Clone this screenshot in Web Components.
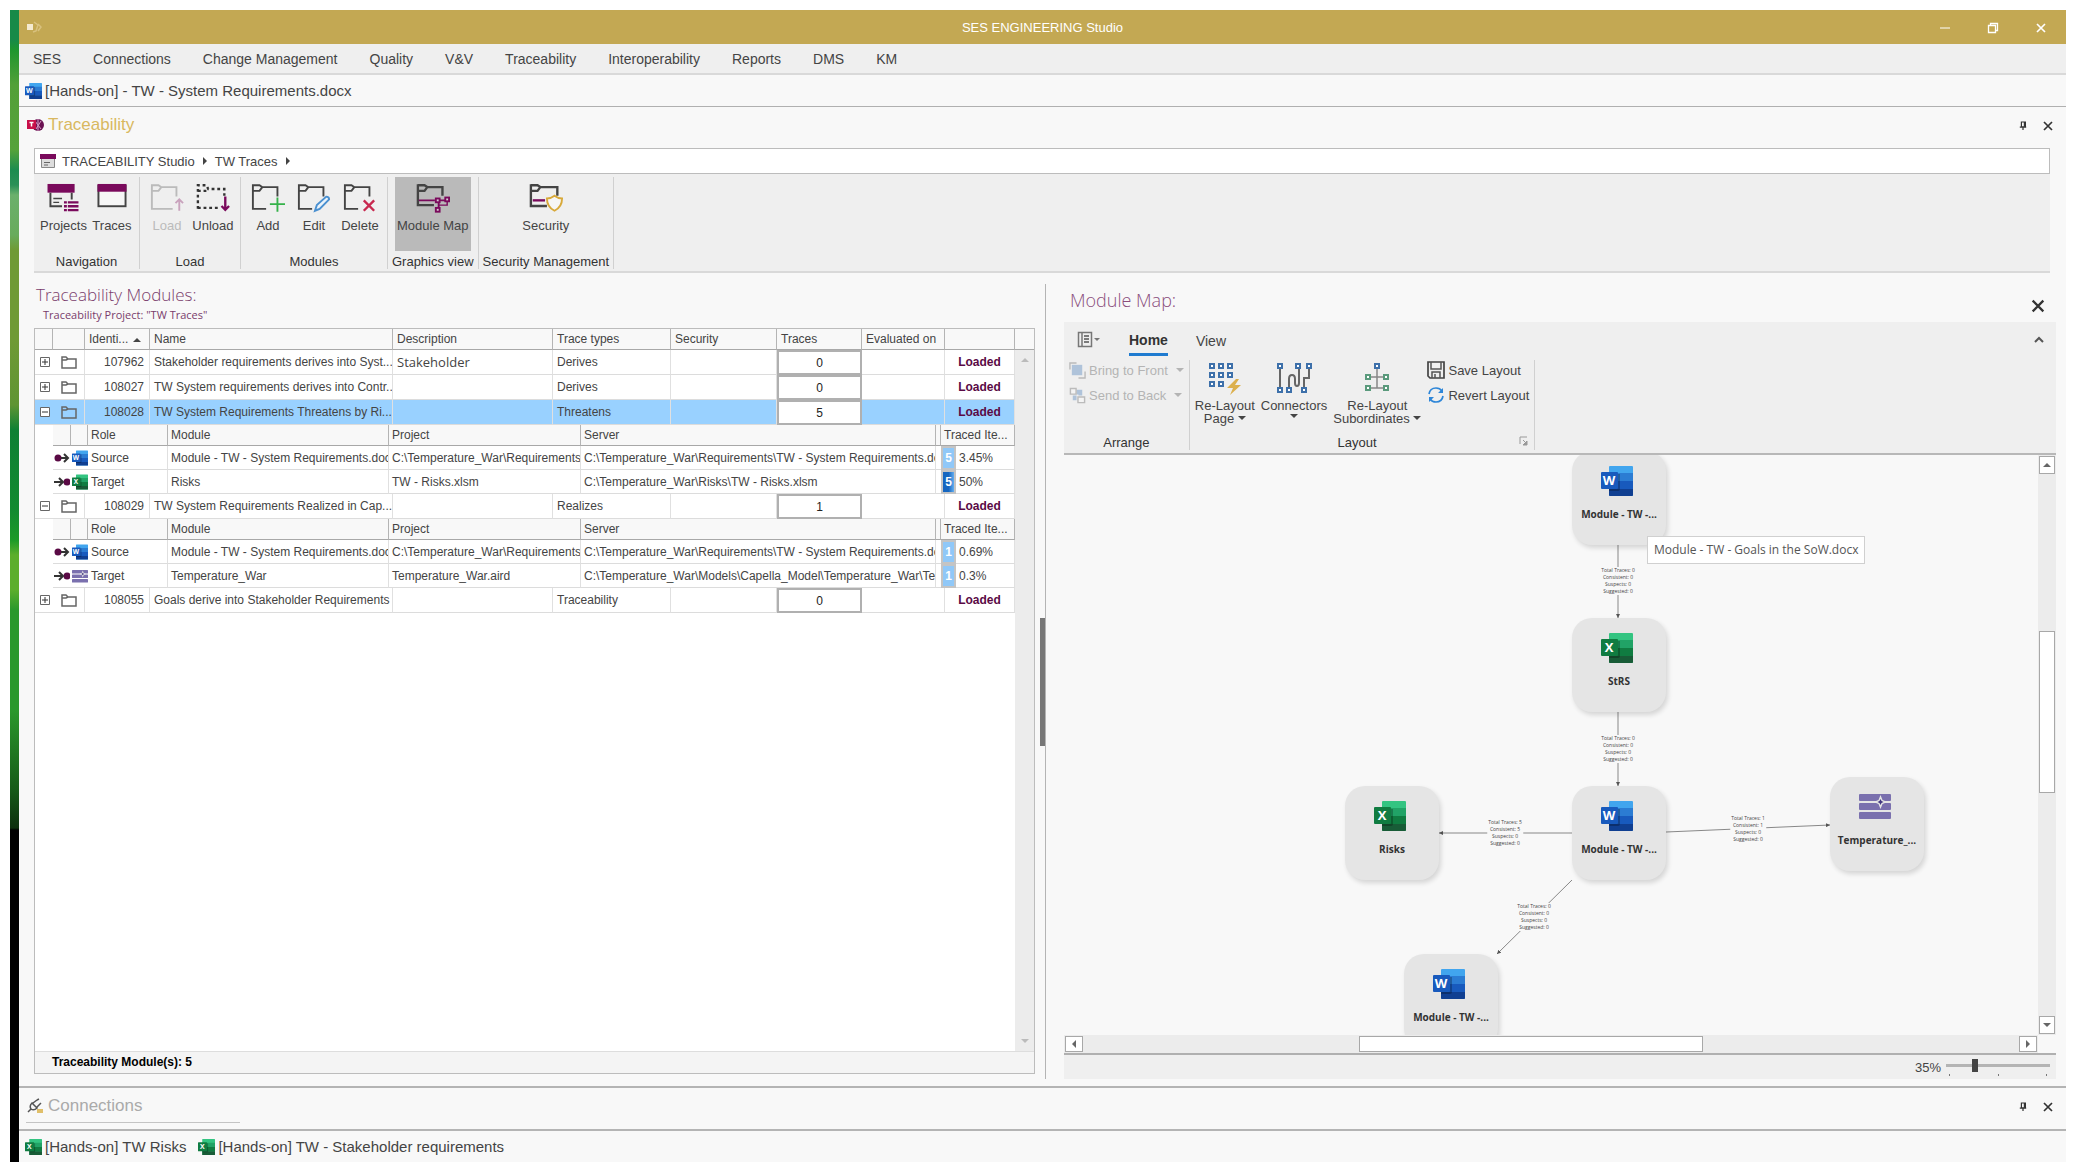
<!DOCTYPE html>
<html lang="en">
<head>
<meta charset="utf-8">
<title>SES ENGINEERING Studio</title>
<style>
  body {
    margin: 0;
    background: #fff;
    color: #444;
    font-family: "Liberation Sans", Arial, sans-serif;
    font-size: 13px;
  }
</style>
</head>
<body>
<studio-app></studio-app>

<script>
// Icons, keyed by name
const fileIcon = (letter, c) => `<svg viewBox="0 0 32 30">
  <rect x="8" y="0" width="24" height="30" rx="1" fill="${c[0]}"/>
  <rect x="8" y="7" width="24" height="8" fill="${c[1]}"/>
  <rect x="8" y="15" width="24" height="8" fill="${c[2]}"/>
  <path d="M8 23h24v6q0 1-1 1H9q-1 0-1-1z" fill="${c[3]}"/>
  <path d="M8 8h11v15q0 2-2 2H8z" fill="#000" opacity=".25"/>
  <rect x="0" y="6" width="17" height="17" rx="1" fill="${c[4]}"/>
  <text x="8" y="19" text-anchor="middle" font-family="Open Sans, sans-serif" font-weight="700" font-size="13" fill="#fff">${letter}</text>
</svg>`;

// Folder outline with a tab; the lower right corner is left open for a badge
const folder = 'M2 2h7l3 2-3 4H2M12 4h16v10M2 1v26h14';

const icons = {
  word: fileIcon('W', ['#41a5ee', '#2b7cd3', '#185abd', '#103f91', '#185abd']),
  excel: fileIcon('X', ['#33c481', '#21a366', '#107c41', '#185c37', '#107c41']),
  logo: `<svg viewBox="0 0 16 14"><rect y="4" width="6" height="6" fill="#f4ead0"/><path d="M7 2l4 3-2 6-3 1M11 4l3 3-3 4" fill="none" stroke="#d8c17e" stroke-width="1.500"/></svg>`,
  trace: `<svg viewBox="0 0 17 16"><circle cx="11" cy="8" r="6" fill="#6b1253"/><path d="M8 4l6 8M14 4l-5 8M11 2v12" stroke="#d79bc4" stroke-width="1"/><rect y="3" width="9" height="9" fill="#c8104a"/><path d="M2.500 5.500h4M4.500 5.500v4" stroke="#fff" stroke-width="1.500"/></svg>`,
  studio: `<svg viewBox="0 0 16 14"><rect width="16" height="5" fill="#7a0a5c"/><path d="M1.500 5v8.500h13V5" fill="#ddd" stroke="#888"/><path d="M4 8.500h6M4 11h4" stroke="#666"/></svg>`,
  projects: `<svg viewBox="0 0 34 31"><rect x="1" y="1" width="28" height="9" fill="#7a0a5c"/><path d="M4 10v14h12M26 10v7" fill="none" stroke="#444" stroke-width="2"/><path d="M7 16h9M7 20h6" stroke="#444" stroke-width="1.500"/><path d="M18 20h3M22 20h11M18 24h3M22 24h11M18 28h3M22 28h11" stroke="#7a0a5c" stroke-width="2.500"/></svg>`,
  traces: `<svg viewBox="0 0 34 31"><rect x="3" y="3" width="28" height="21" fill="#f6f6f6" stroke="#444" stroke-width="2"/><rect x="2" y="1" width="30" height="8" fill="#7a0a5c"/></svg>`,
  load: `<svg viewBox="0 0 36 31"><path d="${folder}h8" fill="none" stroke="#bbb" stroke-width="2"/><path d="M31 29V17M27 21l4-4 4 4" fill="none" stroke="#c9a3bd" stroke-width="2"/></svg>`,
  unload: `<svg viewBox="0 0 36 31"><path d="M2 27V2h9l2 4h17v7M2 8h9M2 26h22" fill="none" stroke="#333" stroke-width="2.500" stroke-dasharray="3 3"/><path d="M31 14v14M27 24l4 4 4-4" fill="none" stroke="#7a0a5c" stroke-width="2.500"/></svg>`,
  add: `<svg viewBox="0 0 36 31"><path d="${folder}" fill="none" stroke="#444" stroke-width="2"/><path d="M28 15v15M20 22h16" stroke="#35b24a" stroke-width="2"/></svg>`,
  edit: `<svg viewBox="0 0 36 31"><path d="${folder}" fill="none" stroke="#444" stroke-width="2"/><path d="M19 29l2-6 10-9q3 0 3 3l-10 10z" fill="#eaf3fb" stroke="#4a90d0" stroke-width="2"/></svg>`,
  delete: `<svg viewBox="0 0 36 31"><path d="${folder}" fill="none" stroke="#444" stroke-width="2"/><path d="M22 18l11 11M33 18L22 29" stroke="#c8284f" stroke-width="2.500"/></svg>`,
  map: `<svg viewBox="0 0 36 31"><path d="M2 2h7l3 2-3 4H2M12 4h16v9M2 1v22h17" fill="none" stroke="#444" stroke-width="2.500"/><path d="M3 18h17M24 18h8M24 20v7" fill="none" stroke="#7a0a5c" stroke-width="2"/><path d="M24 23h9v-4" fill="none" stroke="#7a0a5c" stroke-width="1.500"/><g fill="#d8c8d4" stroke="#7a0a5c" stroke-width="2"><rect x="21" y="16" width="4" height="4"/><rect x="31" y="15" width="4" height="4"/><rect x="21" y="26" width="4" height="4"/></g></svg>`,
  security: `<svg viewBox="0 0 36 31"><path d="M2 2h7l3 2-3 4H2M12 4h18v9M2 1v23h17" fill="none" stroke="#444" stroke-width="2.500"/><path d="M4 18h13" stroke="#7a0a5c" stroke-width="2.500"/><path d="M27 13q4 3 8 3 0 9-8 13-8-4-8-13 4 0 8-3z" fill="#f6f6f6" stroke="#d8a93a" stroke-width="2"/></svg>`,
  folder: `<svg viewBox="0 0 16 13"><path d="M1 12V1h4l2 2h8v9zM1 4h4l2-1" fill="none" stroke="#666" stroke-width="1.500"/></svg>`,
  plus: `<svg viewBox="0 0 10 10"><path d="M.5.5h9v9h-9z" fill="#fff" stroke="#666"/><path d="M2 5h6M5 2v6" stroke="#333"/></svg>`,
  minus: `<svg viewBox="0 0 10 10"><path d="M.5.5h9v9h-9z" fill="#fff" stroke="#666"/><path d="M2 5h6" stroke="#333"/></svg>`,
  source: `<svg viewBox="0 0 16 12"><circle cx="4" cy="6" r="3.500" fill="#5a0a45"/><path d="M7 6h7M10 2l4 4-4 4" fill="none" stroke="#333" stroke-width="2"/></svg>`,
  target: `<svg viewBox="0 0 16 12"><circle cx="13" cy="6" r="3.500" fill="#5a0a45"/><path d="M0 6h9M5 2l4 4-4 4" fill="none" stroke="#333" stroke-width="2"/></svg>`,
  capella: `<svg viewBox="0 0 32 26"><g fill="#7a70ae"><rect width="32" height="7" rx="1"/><rect y="9" width="32" height="7" rx="1"/><rect y="18" width="32" height="7" rx="1"/></g><path d="M21.500 1l2 5 5 2-5 2-2 5-2-5-5-2 5-2z" fill="#e5e5e5"/><path d="M21.500 5l1 2 2 1-2 1-1 2-1-2-2-1 2-1z" fill="#3f3580"/></svg>`,
  plug: `<svg viewBox="0 0 17 16"><path d="M1 14l3-3M5 5q-3 3-1 6 3 2 6-1zM5 5l5 5M6 5l4-3M10 9l4-4M10 2l2-1" fill="none" stroke="#555" stroke-width="1.500"/><rect x="10" y="11" width="6" height="4" fill="#e0bf6a"/></svg>`,
  pin: `<svg viewBox="0 0 10 12"><path d="M3 1h5v6H3zM1 7.500h8M5 8v3" fill="none" stroke="#333" stroke-width="1.500"/><path d="M6 1h2v6H6z" fill="#333"/></svg>`,
  close: `<svg viewBox="0 0 12 12"><path d="M2 2l8 8M10 2l-8 8" stroke="currentColor" stroke-width="1.700"/></svg>`,
  minimize: `<svg viewBox="0 0 12 12"><path d="M1 6h10" stroke="currentColor"/></svg>`,
  restore: `<svg viewBox="0 0 12 12"><path d="M1.500 3.500h7v7h-7zM3.500 3V1.500h7v7H9" fill="none" stroke="currentColor" stroke-width="1.300"/></svg>`,
  file: `<svg viewBox="0 0 24 17"><path d="M1.500 1.500h13v14h-13zM5 2v13" fill="none" stroke="#777" stroke-width="1.500"/><path d="M7 5h5M7 8h5M7 11h5" stroke="#555" stroke-width="1.500"/><path d="M17 7h6l-3 3z" fill="#777"/></svg>`,
  front: `<svg viewBox="0 0 18 18"><path d="M1 8V1h7M10 17h7v-7" fill="none" stroke="#bbb" stroke-width="1.500"/><rect x="3" y="3" width="11" height="11" fill="#afc3da"/></svg>`,
  back: `<svg viewBox="0 0 18 18"><path d="M8 3h6v6h-4V8H8zM4 9h4v5H4z" fill="#afc3da"/><path d="M1.500 1.500h6v6h-6zM9.500 10.500h7v6h-7z" fill="#f4f4f4" stroke="#bbb" stroke-width="1.500"/></svg>`,
  relayout: `<svg viewBox="0 0 34 34"><g fill="#fff" stroke="#3d70aa" stroke-width="2"><path d="M2 2h4v4H2zM11 2h4v4h-4zM20 2h4v4h-4zM2 11h4v4H2zM11 11h4v4h-4zM20 11h4v4h-4zM2 20h4v4H2zM11 20h4v4h-4z"/></g><path d="M28 17l-9 9h6l-3 7 11-10h-6l4-6z" fill="#dcb04d"/></svg>`,
  connectors: `<svg viewBox="0 0 36 34"><path d="M4 5v22M13 27V17q0-4 3-4t3 4v4q0 3 2 3t2-3V5M28 27V16h5V5" fill="none" stroke="#666" stroke-width="2"/><g fill="#fff" stroke="#3d70aa" stroke-width="2"><path d="M2 2h4v4H2zM20 2h4v4h-4zM31 2h4v4h-4zM2 26h4v4H2zM11 26h4v4h-4zM26 26h4v4h-4z"/></g></svg>`,
  subordinates: `<svg viewBox="0 0 26 34"><path d="M13 6v20M5 15h16M5 26h16" fill="none" stroke="#888" stroke-width="1.500"/><g fill="#fff" stroke-width="2"><path d="M11 2h4v4h-4z" stroke="#3d70aa"/><path d="M2 13h4v4H2zM20 13h4v4h-4zM2 24h4v4H2zM20 24h4v4h-4z" stroke="#5a9a7c"/></g></svg>`,
  save: `<svg viewBox="0 0 18 18"><path d="M1 1h16v16H3l-2-2z" fill="none" stroke="#444" stroke-width="1.700"/><path d="M4 1v7h10V1M5 17v-6h8v6M8 13v4" fill="none" stroke="#555" stroke-width="1.500"/></svg>`,
  revert: `<svg viewBox="0 0 18 18"><path d="M2 8q1-6 7-6 4 0 6 3M16 10q-1 6-7 6-4 0-6-3" fill="none" stroke="#2e86d8" stroke-width="1.700"/><path d="M16 2v5h-5zM2 16v-5h5z" fill="#2e86d8"/></svg>`,
  launcher: `<svg viewBox="0 0 10 10"><path d="M1 8V1h7" fill="none" stroke="#999"/><path d="M4 4l4 4M8 5v4H4z" fill="#999" stroke="#999"/></svg>`,
  collapse: `<svg viewBox="0 0 10 10"><path d="M1 7l4-4 4 4" fill="none" stroke="#555" stroke-width="2"/></svg>`,
  up: `<svg viewBox="0 0 8 8"><path d="M0 6l4-4 4 4z" fill="currentColor"/></svg>`,
  down: `<svg viewBox="0 0 8 8"><path d="M0 2h8L4 6z" fill="currentColor"/></svg>`,
  left: `<svg viewBox="0 0 8 8"><path d="M6 0v8L2 4z" fill="currentColor"/></svg>`,
  right: `<svg viewBox="0 0 8 8"><path d="M2 0v8l4-4z" fill="currentColor"/></svg>`
};

const resetButton = `
  button { border: 0; padding: 0; margin: 0; background: none; color: inherit; font: inherit; }
`;

// Registers an element whose shadow root is cloned from a template
function component(name, html) {
  const template = document.createElement('template');
  template.innerHTML = html;

  customElements.define(name, class extends HTMLElement {
    constructor() {
      super();
      this.attachShadow({ mode: 'open' }).appendChild(template.content.cloneNode(true));
    }
  });
}

class StudioIcon extends HTMLElement {
  connectedCallback() {
    if (this.shadowRoot) return;
    const w = this.getAttribute('w') || 16;
    const h = this.getAttribute('h') || w;
    this.attachShadow({ mode: 'open' }).innerHTML = `
      <style>
        :host { display: inline-block; flex: none; width: ${w}px; height: ${h}px; vertical-align: middle; }
        svg { display: block; width: 100%; height: 100%; }
      </style>
      ${icons[this.getAttribute('name')]}`;
  }
}
customElements.define('studio-icon', StudioIcon);

component('title-bar', `
<style>
  :host { display: grid; grid-template-columns: 1fr auto 1fr; align-items: center; height: 34px; padding: 0 8px; background: #c3a853; color: #fff; }
  .controls { display: flex; justify-content: flex-end; gap: 36px; padding-right: 11px; }
  h1 { margin: 0; font-size: 13px; font-weight: 400; }
  ${resetButton}
</style>
<studio-icon name="logo" w="16" h="14"></studio-icon>
<h1><slot></slot></h1>
<div class="controls">
  <button aria-label="Minimize"><studio-icon name="minimize" w="12"></studio-icon></button>
  <button aria-label="Restore"><studio-icon name="restore" w="12"></studio-icon></button>
  <button aria-label="Close"><studio-icon name="close" w="12"></studio-icon></button>
</div>
`);

component('menu-bar', `
<style>
  :host { display: block; background: #efefef; border-bottom: 2px solid #d9d9d9; }
  nav { display: flex; gap: 32px; padding: 0 14px; height: 29px; }
  ${resetButton}
  button { font-size: 14px; }
</style>
<nav>
  <button>SES</button>
  <button>Connections</button>
  <button>Change Management</button>
  <button>Quality</button>
  <button>V&amp;V</button>
  <button>Traceability</button>
  <button>Interoperability</button>
  <button>Reports</button>
  <button>DMS</button>
  <button>KM</button>
</nav>
`);

component('doc-tabs', `
<style>
  :host { display: flex; align-items: center; gap: 12px; height: 31px; padding: 0 6px; background: #f8f8f8; }
</style>
<slot></slot>
`);

class DocTab extends HTMLElement {
  connectedCallback() {
    if (this.shadowRoot) return;
    this.attachShadow({ mode: 'open' }).innerHTML = `
      <style>
        :host { display: block; }
        ${resetButton}
        button { display: flex; align-items: center; gap: 3px; font-size: 15px; }
      </style>
      <button><studio-icon name="${this.getAttribute('icon')}" w="17" h="16"></studio-icon><slot></slot></button>`;
  }
}
customElements.define('doc-tab', DocTab);

component('panel-header', `
<style>
  :host { display: flex; align-items: center; justify-content: space-between; height: 32px; padding: 2px 12px 0 8px; }
  h2 { display: flex; align-items: center; gap: 4px; margin: 0; font-size: 17px; font-weight: 400; }
  .controls { display: flex; gap: 15px; color: #333; }
  ${resetButton}
</style>
<h2><slot></slot></h2>
<div class="controls">
  <button aria-label="Pin"><studio-icon name="pin" w="8" h="10"></studio-icon></button>
  <button aria-label="Close"><studio-icon name="close" w="12"></studio-icon></button>
</div>
`);

component('bread-crumbs', `
<style>
  :host { display: block; background: #fff; border: 1px solid #bcbcbc; }
  nav { display: flex; align-items: center; gap: 6px; height: 24px; padding: 0 5px; }
  a { color: #444; text-decoration: none; }
</style>
<nav>
  <studio-icon name="studio" w="16" h="14"></studio-icon>
  <a href="#">TRACEABILITY Studio</a>
  <studio-icon name="right" w="8"></studio-icon>
  <a href="#">TW Traces</a>
  <studio-icon name="right" w="8"></studio-icon>
</nav>
`);

// Labelled block of ribbon commands with a rule on its right
class RibbonGroup extends HTMLElement {
  connectedCallback() {
    if (this.shadowRoot) return;
    this.attachShadow({ mode: 'open' }).innerHTML = `
      <style>
        :host { display: flex; flex-direction: column; padding: 0 4px; border-right: 1px solid #d0d0d0; }
        .items { display: flex; flex: 1; justify-content: center; }
        .foot { display: flex; justify-content: center; color: #333; line-height: 14px; }
      </style>
      <div class="items"><slot></slot></div>
      <div class="foot">${this.getAttribute('label')}</div>`;
  }
}
customElements.define('ribbon-group', RibbonGroup);

class RibbonButton extends HTMLElement {
  connectedCallback() {
    if (this.shadowRoot) return;
    const off = this.hasAttribute('disabled') ? 'disabled' : '';
    this.attachShadow({ mode: 'open' }).innerHTML = `
      <style>
        :host { display: block; }
        :host([active]) button { background: #bababa; }
        ${resetButton}
        button { box-sizing: border-box; display: flex; flex-direction: column; align-items: center; gap: 5px; min-width: 46px; height: 74px; padding: 6px 2px 0; }
        button:disabled { color: #bbb; }
      </style>
      <button ${off}><studio-icon name="${this.getAttribute('icon')}" w="34" h="30"></studio-icon><slot></slot></button>`;
  }
}
customElements.define('ribbon-button', RibbonButton);

component('main-ribbon', `
<style>
  :host { display: flex; background: #efefef; border-bottom: 2px solid #d9d9d9; padding: 3px 0 2px; height: 92px; }
</style>
<ribbon-group label="Navigation">
  <ribbon-button icon="projects">Projects</ribbon-button>
  <ribbon-button icon="traces">Traces</ribbon-button>
</ribbon-group>
<ribbon-group label="Load">
  <ribbon-button icon="load" disabled>Load</ribbon-button>
  <ribbon-button icon="unload">Unload</ribbon-button>
</ribbon-group>
<ribbon-group label="Modules">
  <ribbon-button icon="add">Add</ribbon-button>
  <ribbon-button icon="edit">Edit</ribbon-button>
  <ribbon-button icon="delete">Delete</ribbon-button>
</ribbon-group>
<ribbon-group label="Graphics view">
  <ribbon-button icon="map" active>Module Map</ribbon-button>
</ribbon-group>
<ribbon-group label="Security Management">
  <ribbon-button icon="security">Security</ribbon-button>
</ribbon-group>
`);

// Rows of the traceability grid
const modules = [
  { id: '107962', name: 'Stakeholder requirements derives into Syst...', desc: 'Stakeholder', type: 'Derives', traces: 0 },
  { id: '108027', name: 'TW System requirements derives into Contr...', type: 'Derives', traces: 0 },
  {
    id: '108028', name: 'TW System Requirements Threatens by Ri...', type: 'Threatens', traces: 5, selected: true,
    items: [
      { role: 'Source', icon: 'word', module: 'Module - TW - System Requirements.doc', project: 'C:\\Temperature_War\\Requirements', server: 'C:\\Temperature_War\\Requirements\\TW - System Requirements.do', count: 5, pct: '3.45%' },
      { role: 'Target', icon: 'excel', module: 'Risks', project: 'TW - Risks.xlsm', server: 'C:\\Temperature_War\\Risks\\TW - Risks.xlsm', count: 5, pct: '50%', half: true }
    ]
  },
  {
    id: '108029', name: 'TW System Requirements Realized in Cap...', type: 'Realizes', traces: 1,
    items: [
      { role: 'Source', icon: 'word', module: 'Module - TW - System Requirements.doc', project: 'C:\\Temperature_War\\Requirements', server: 'C:\\Temperature_War\\Requirements\\TW - System Requirements.do', count: 1, pct: '0.69%' },
      { role: 'Target', icon: 'capella', module: 'Temperature_War', project: 'Temperature_War.aird', server: 'C:\\Temperature_War\\Models\\Capella_Model\\Temperature_War\\Ter', count: 1, pct: '0.3%' }
    ]
  },
  { id: '108055', name: 'Goals derive into Stakeholder Requirements', type: 'Traceability', traces: 0 }
];

class TraceGrid extends HTMLElement {
  constructor() {
    super();
    this.attachShadow({ mode: 'open' });
  }

  connectedCallback() {
    this.shadowRoot.innerHTML = `
<style>
  :host { display: flex; flex-direction: column; background: #fff; border: 1px solid #bcbcbc; font-size: 12px; }
  .main { display: flex; flex: 1; }
  .rows { flex: 1; min-width: 0; }
  .scroll { display: flex; flex-direction: column; width: 19px; background: #ececec; color: #bbb; }
  .cap { height: 20px; background: #f8f8f8; border-bottom: 1px solid #a8a8a8; }
  .track { display: flex; flex: 1; flex-direction: column; justify-content: space-between; align-items: center; padding: 6px 0; }
  .foot { padding: 0 17px; line-height: 21px; background: #f4f4f4; border-top: 1px solid #ddd; color: #000; font-weight: 700; }
  table { width: 100%; table-layout: fixed; border-spacing: 0; }
  th, td { box-sizing: border-box; padding: 0 0 0 4px; text-align: left; font-weight: 400; white-space: nowrap; overflow: hidden; border-right: 1px solid #e0e0e0; border-bottom: 1px solid #dcdcdc; }
  th { height: 21px; background: #f8f8f8; border-right-color: #b4b4b4; border-bottom-color: #a8a8a8; }
  th studio-icon { margin-left: 5px; }
  td { height: 25px; }
  td.icon { padding: 0; text-align: center; }
  td.toggle { padding: 0 0 0 5px; border-right: 0; }
  td.id { padding-right: 5px; text-align: right; }
  td.desc { font-family: "Open Sans", sans-serif; font-size: 13px; }
  td.loaded { padding: 0; text-align: center; color: #5a0a45; font-weight: 700; }
  td.num, td.nested, td.blank { padding: 0; border: 0; }
  tr.selected td { background: #99d1ff; }
  .nested th, .nested td { padding-left: 3px; }
  .nested td { height: 24px; }
  .nested .icon { padding: 0; border-right: 0; }
  .nested .clip { padding: 0; border-right: 0; }
  .nested td.num { padding: 0; }
  ${resetButton}
  .toggle button { display: flex; }
  .num button { display: block; box-sizing: border-box; width: 100%; height: 25px; background: #fff; border: 2px solid #b0b0b0; color: #222; }
  .badge { display: block; box-sizing: border-box; height: 24px; line-height: 20px; border: 2px solid #c4c4c4; background: #90c8f8; color: #fff; font-weight: 700; text-align: center; }
  .badge.half { background: linear-gradient(90deg, #1566c0 50%, #64aef0); }
</style>
<div class="main">
  <div class="rows">
    <table>
      <colgroup><col style="width:18px"><col style="width:32px"><col style="width:65px"><col><col style="width:160px"><col style="width:118px"><col style="width:106px"><col style="width:85px"><col style="width:83px"><col style="width:70px"></colgroup>
      <thead>
        <tr><th></th><th></th><th>Identi...<studio-icon name="up" w="8"></studio-icon></th><th>Name</th><th>Description</th><th>Trace types</th><th>Security</th><th>Traces</th><th>Evaluated on</th><th></th></tr>
      </thead>
      <tbody>${modules.map(m => this.row(m)).join('')}</tbody>
    </table>
  </div>
  <div class="scroll">
    <div class="cap"></div>
    <div class="track"><studio-icon name="up" w="8"></studio-icon><studio-icon name="down" w="8"></studio-icon></div>
  </div>
</div>
<div class="foot">Traceability Module(s): 5</div>`;
  }

  row(m) {
    return `
      <tr class="${m.selected ? 'selected' : ''}">
        <td class="toggle"><button aria-label="Toggle details"><studio-icon name="${m.items ? 'minus' : 'plus'}" w="10"></studio-icon></button></td>
        <td class="icon"><studio-icon name="folder" w="16" h="13"></studio-icon></td>
        <td class="id">${m.id}</td>
        <td>${m.name}</td>
        <td class="desc">${m.desc || ''}</td>
        <td>${m.type}</td>
        <td></td>
        <td class="num"><button>${m.traces}</button></td>
        <td></td>
        <td class="loaded">Loaded</td>
      </tr>
      ${m.items ? this.details(m.items) : ''}`;
  }

  details(items) {
    return `
      <tr><td class="blank"></td><td class="nested" colspan="9">
        <table>
          <colgroup><col style="width:18px"><col style="width:17px"><col style="width:80px"><col><col style="width:192px"><col style="width:355px"><col style="width:5px"><col style="width:15px"><col style="width:59px"></colgroup>
          <thead><tr><th></th><th></th><th>Role</th><th>Module</th><th>Project</th><th>Server</th><th></th><th colspan="2">Traced Ite...</th></tr></thead>
          <tbody>${items.map(i => `
            <tr>
              <td class="icon"><studio-icon name="${i.role.toLowerCase()}" w="16" h="12"></studio-icon></td>
              <td class="icon"><studio-icon name="${i.icon}" w="16" h="${i.icon === 'capella' ? 13 : 16}"></studio-icon></td>
              <td>${i.role}</td>
              <td>${i.module}</td>
              <td>${i.project}</td>
              <td>${i.server}</td>
              <td class="clip"></td>
              <td class="num"><span class="badge ${i.half ? 'half' : ''}">${i.count}</span></td>
              <td>${i.pct}</td>
            </tr>`).join('')}
          </tbody>
        </table>
      </td></tr>`;
  }
}
customElements.define('trace-grid', TraceGrid);

component('modules-pane', `
<style>
  :host { display: flex; flex-direction: column; padding: 10px 0 5px; color: #7a3d6c; font-family: "Open Sans", sans-serif; }
  h3 { margin: 0 2px; font-size: 17px; line-height: 24px; font-weight: 300; }
  p { margin: 0 9px 5px; font-size: 11px; line-height: 16px; }
  trace-grid { flex: 1; color: #444; font-family: "Liberation Sans", Arial, sans-serif; }
</style>
<h3>Traceability Modules:</h3>
<p>Traceability Project: "TW Traces"</p>
<trace-grid></trace-grid>
`);

component('pane-splitter', `
<style>
  :host { display: flex; align-items: center; margin-top: 11px; padding-left: 5px; }
  .grip { width: 5px; height: 128px; background: #777; }
  .line { width: 1px; align-self: stretch; background: #b4b4b4; }
</style>
<div class="grip"></div>
<div class="line"></div>
`);

component('map-ribbon', `
<style>
  :host { display: block; background: #efefef; border-bottom: 2px solid #b8b8b8; }
  .tabs { display: flex; align-items: center; height: 34px; padding: 0 12px 0 13px; font-size: 14px; }
  .tabs button { height: 34px; padding-top: 3px; margin-left: 28px; }
  .tabs .file { margin: 0; padding: 0; }
  .tabs .fold { margin-left: auto; padding: 0; }
  .tabs .current { box-sizing: border-box; border-bottom: 3px solid #1f7bd0; padding-top: 5px; color: #333; font-weight: 700; }
  .groups { display: flex; padding: 4px 0 3px; height: 90px; }
  section { display: flex; flex-direction: column; padding: 0 5px; border-right: 1px solid #d0d0d0; }
  .items { display: flex; flex: 1; gap: 6px; }
  .col { display: flex; flex-direction: column; gap: 7px; padding-top: 1px; }
  .col button { display: flex; align-items: center; gap: 3px; height: 18px; }
  .col button:disabled { color: #b4b4b4; }
  .col studio-icon:last-child:not(:first-child) { margin-left: 5px; }
  .big { display: flex; flex-direction: column; align-items: center; line-height: 13px; padding: 2px 0 0; }
  .big studio-icon:first-child { margin-bottom: 3px; }
  .foot { display: flex; color: #333; line-height: 14px; }
  .foot span { flex: 1; text-align: center; }
  ${resetButton}
</style>
<div class="tabs">
  <button class="file" aria-label="File"><studio-icon name="file" w="24" h="17"></studio-icon></button>
  <button class="current">Home</button>
  <button>View</button>
  <button class="fold" aria-label="Collapse ribbon"><studio-icon name="collapse" w="10"></studio-icon></button>
</div>
<div class="groups">
  <section>
    <div class="items">
      <div class="col">
        <button disabled><studio-icon name="front" w="17"></studio-icon>Bring to Front<studio-icon name="down" w="8"></studio-icon></button>
        <button disabled><studio-icon name="back" w="17"></studio-icon>Send to Back<studio-icon name="down" w="8"></studio-icon></button>
      </div>
    </div>
    <div class="foot"><span>Arrange</span></div>
  </section>
  <section>
    <div class="items">
      <button class="big"><studio-icon name="relayout" w="34"></studio-icon><span>Re-Layout</span><span>Page <studio-icon name="down" w="8"></studio-icon></span></button>
      <button class="big"><studio-icon name="connectors" w="36" h="34"></studio-icon><span>Connectors</span><studio-icon name="down" w="8"></studio-icon></button>
      <button class="big"><studio-icon name="subordinates" w="26" h="34"></studio-icon><span>Re-Layout</span><span>Subordinates <studio-icon name="down" w="8"></studio-icon></span></button>
      <div class="col">
        <button><studio-icon name="save" w="18"></studio-icon>Save Layout</button>
        <button><studio-icon name="revert" w="18"></studio-icon>Revert Layout</button>
      </div>
    </div>
    <div class="foot"><span>Layout</span><studio-icon name="launcher" w="10"></studio-icon></div>
  </section>
</div>
`);

class ScrollRail extends HTMLElement {
  connectedCallback() {
    if (this.shadowRoot) return;
    const across = this.hasAttribute('horizontal');
    const [before, size, after] = this.getAttribute('parts').split(' ');
    this.attachShadow({ mode: 'open' }).innerHTML = `
      <style>
        :host { display: flex; flex-direction: ${across ? 'row' : 'column'}; background: #ececec; color: #666; padding: 1px; }
        ${resetButton}
        button { box-sizing: border-box; display: flex; align-items: center; justify-content: center; flex: 0 0 18px; background: #fff; border: 1px solid #a8a8a8; }
        .thumb { background: #fff; border: 1px solid #a8a8a8; flex: ${size} 1 0; }
        .before { flex: ${before} 1 0; }
        .after { flex: ${after} 1 0; }
      </style>
      <button aria-label="Back"><studio-icon name="${across ? 'left' : 'up'}" w="8"></studio-icon></button>
      <div class="before"></div><div class="thumb"></div><div class="after"></div>
      <button aria-label="Forward"><studio-icon name="${across ? 'right' : 'down'}" w="8"></studio-icon></button>`;
  }
}
customElements.define('scroll-rail', ScrollRail);

// Diagram canvas: nodes and edge labels are placed by their own coordinates
const nodes = [
  { x: 508, y: -4, icon: 'word', label: 'Module - TW -...' },
  { x: 508, y: 163, icon: 'excel', label: 'StRS' },
  { x: 281, y: 331, icon: 'excel', label: 'Risks' },
  { x: 508, y: 331, icon: 'word', label: 'Module - TW -...' },
  { x: 766, y: 322, icon: 'capella', label: 'Temperature_...' },
  { x: 340, y: 499, icon: 'word', label: 'Module - TW -...' }
];
const edges = [
  { from: [554, 89], to: [554, 163], at: [554, 126], total: 0, consistent: 0 },
  { from: [554, 257], to: [554, 331], at: [554, 294], total: 0, consistent: 0 },
  { from: [508, 378], to: [375, 378], at: [441, 378], total: 5, consistent: 5 },
  { from: [508, 425], to: [433, 499], at: [470, 462], total: 0, consistent: 0 },
  { from: [602, 377], to: [766, 370], at: [684, 374], total: 1, consistent: 1 }
];

class MapCanvas extends HTMLElement {
  constructor() {
    super();
    this.attachShadow({ mode: 'open' });
  }

  connectedCallback() {
    this.shadowRoot.innerHTML = `
<style>
  :host { display: block; position: relative; overflow: hidden; background: #f8f8f8; font-family: "Open Sans", sans-serif; }
  .lines { position: absolute; inset: 0; width: 100%; height: 100%; }
  .node { position: absolute; box-sizing: border-box; display: flex; flex-direction: column; align-items: center; justify-content: space-between; width: 94px; height: 94px; padding: 15px 0 24px; border-radius: 20px; background: #e5e5e5; box-shadow: 2px 3px 5px rgba(0, 0, 0, .14); color: #333; font-size: 10px; line-height: 14px; font-weight: 700; }
  .node studio-icon { margin-right: 4px; }
  .edge { position: absolute; transform: translate(-50%, -50%); padding: 0 1px; background: #f8f8f8; color: #444; font-size: 5px; line-height: 7px; text-align: center; white-space: nowrap; }
  .tip { position: absolute; left: 583px; top: 81px; padding: 0 6px; background: #fff; border: 1px solid #d0d0d0; color: #555; font-size: 12px; line-height: 26px; white-space: nowrap; }
</style>
<svg class="lines">
  <defs><marker id="tip" viewBox="0 0 6 6" refX="6" refY="3" markerWidth="4" markerHeight="4" orient="auto"><path d="M0 0l6 3-6 3z" fill="#555"/></marker></defs>
  ${edges.map(e => `<line x1="${e.from[0]}" y1="${e.from[1]}" x2="${e.to[0]}" y2="${e.to[1]}" stroke="#888" marker-end="url(#tip)"/>`).join('')}
</svg>
${edges.map(e => `<div class="edge" style="left:${e.at[0]}px;top:${e.at[1]}px">Total Traces: ${e.total}<br>Consistent: ${e.consistent}<br>Suspects: 0<br>Suggested: 0</div>`).join('')}
${nodes.map(n => `<div class="node" style="left:${n.x}px;top:${n.y}px"><studio-icon name="${n.icon}" w="32" h="30"></studio-icon>${n.label}</div>`).join('')}
<div class="tip" role="tooltip">Module - TW - Goals in the SoW.docx</div>`;
  }
}
customElements.define('map-canvas', MapCanvas);

component('zoom-bar', `
<style>
  :host { display: flex; align-items: center; justify-content: flex-end; gap: 5px; height: 24px; padding-right: 6px; background: #efefef; border-top: 2px solid #b0b0b0; }
  .slider { width: 104px; }
  input { appearance: none; display: block; width: 100%; height: 14px; margin: 0; background: linear-gradient(#b4b4b4, #b4b4b4) center / 100% 3px no-repeat; }
  input::-webkit-slider-thumb { appearance: none; width: 6px; height: 13px; background: #444; }
  .ticks { display: flex; justify-content: space-between; padding: 2px 3px 0; }
  .ticks i { width: 1px; height: 2px; background: #777; }
</style>
<label for="zoom">35%</label>
<div class="slider">
  <input id="zoom" type="range" min="10" max="105" value="35">
  <div class="ticks"><i></i><i></i><i></i></div>
</div>
`);

component('map-pane', `
<style>
  :host { display: flex; flex-direction: column; }
  header { display: flex; align-items: center; justify-content: space-between; height: 49px; padding: 0 10px 0 6px; color: #333; }
  h3 { margin: 0; padding-top: 4px; color: #8a4d7c; font-family: "Open Sans", sans-serif; font-size: 18px; line-height: 24px; font-weight: 300; }
  header button { margin-top: 16px; }
  .view { display: grid; flex: 1; grid-template-columns: minmax(0, 1fr) 18px; grid-template-rows: minmax(0, 1fr) 18px; }
  ${resetButton}
</style>
<header>
  <h3>Module Map:</h3>
  <button aria-label="Close map"><studio-icon name="close" w="16"></studio-icon></button>
</header>
<map-ribbon></map-ribbon>
<div class="view">
  <map-canvas></map-canvas>
  <scroll-rail parts="158 160 224"></scroll-rail>
  <scroll-rail horizontal parts="276 343 316"></scroll-rail>
</div>
<zoom-bar></zoom-bar>
`);

component('studio-app', `
<style>
  :host { display: flex; box-sizing: border-box; min-height: 100vh; padding: 10px 10px 12px; }
  .desktop { width: 9px; background: linear-gradient(#178a48 0 30px, #1f962e 40px, #52a038 75px, #55a23a 140px, #1c8c50 160px, #2a9058 175px, #6bb06c 185px, #68ab5c 225px, #6f9a35 240px, #6f9a35 330px, #5f9433 395px, #0e8034 420px, #128a30 500px, #1c9a28 530px, #5cae2c 545px, #5cae2c 580px, #2a982c 600px, #2a982c 700px, #165a18 780px, #0d300d 818px, #000 820px); }
  .window { display: flex; flex-direction: column; flex: 1; min-width: 0; background: #f8f8f8; }
  .docs { border-bottom: 1px solid #b0b0b0; }
  .trace { color: #d9b860; }
  bread-crumbs { margin: 7px 16px 0 15px; }
  main-ribbon { margin: 0 16px 0 15px; }
  main { display: grid; flex: 1; grid-template-columns: minmax(0, 1001fr) 29px minmax(0, 992fr); padding: 0 10px 7px 15px; border-bottom: 2px solid #b4b4b4; }
  .connections { padding-bottom: 6px; border-bottom: 2px solid #b4b4b4; color: #aaa; }
  .rule { width: 214px; margin-left: 7px; border-top: 1px solid #c4c4c4; }
</style>
<div class="desktop"></div>
<div class="window">
  <title-bar>SES ENGINEERING Studio</title-bar>
  <menu-bar></menu-bar>
  <doc-tabs class="docs"><doc-tab icon="word">[Hands-on] - TW - System Requirements.docx</doc-tab></doc-tabs>
  <panel-header class="trace"><studio-icon name="trace" w="17" h="16"></studio-icon>Traceability</panel-header>
  <bread-crumbs></bread-crumbs>
  <main-ribbon></main-ribbon>
  <main>
    <modules-pane></modules-pane>
    <pane-splitter></pane-splitter>
    <map-pane></map-pane>
  </main>
  <div class="connections">
    <panel-header><studio-icon name="plug" w="17" h="16"></studio-icon>Connections</panel-header>
    <div class="rule"></div>
  </div>
  <doc-tabs>
    <doc-tab icon="excel">[Hands-on] TW Risks</doc-tab>
    <doc-tab icon="excel">[Hands-on] TW - Stakeholder requirements</doc-tab>
  </doc-tabs>
</div>
`);
</script>
</body>
</html>
